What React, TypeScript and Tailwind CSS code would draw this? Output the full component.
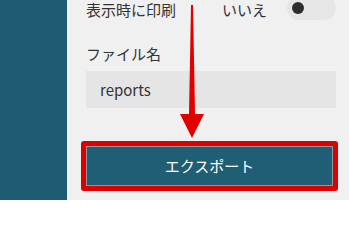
import React from "react";

export default function App() {
  const font = { fontFamily: '"Noto Sans CJK JP", "Noto Sans", sans-serif' };
  return (
    <div className="relative flex w-[349px] h-[200px] overflow-hidden bg-[#f0f0f0]" style={font}>
      <div className="w-[67px] shrink-0 bg-[#1f5c74]" />
      <div className="flex-1 flex flex-col pl-[19px] pr-[13px]">
        <div className="flex items-start h-[20px] text-[15px] text-[#333]">
          <span className="w-[136px] leading-[20px]">表示時に印刷</span>
          <span className="leading-[20px]">いいえ</span>
          <div className="ml-auto mt-[-4px] w-[49px] h-[24px] rounded-full bg-[#e6e6e6] flex items-center pl-[5px]">
            <div className="w-[12px] h-[12px] rounded-full bg-[#2e2e2e]" />
          </div>
        </div>
        <div className="mt-[23px] h-[22px] flex items-center text-[15px] text-[#333] leading-[20px]">ファイル名</div>
        <div className="mt-[6px] h-[37px] bg-[#e5e5e5] flex items-center pl-[14px] text-[15px] text-[#333] leading-[20px]">
          reports
        </div>
        <div className="mt-[33px] ml-[-5px] mr-[-2px] h-[50px] rounded-[3px] bg-[#dd0000] p-[5px]">
          <div className="w-full h-full bg-[#1f5e75] border border-[#8a9aa0] flex items-center justify-center text-white text-[15px] leading-[20px]">
            エクスポート
          </div>
        </div>
      </div>
      <svg className="absolute left-0 top-0 pointer-events-none" width="349" height="200" viewBox="0 0 349 200">
        <polygon
          points="191,5 193,5 195,114 204,114 192,138 180,114 189,114"
          fill="#e00000"
        />
      </svg>
    </div>
  );
}
